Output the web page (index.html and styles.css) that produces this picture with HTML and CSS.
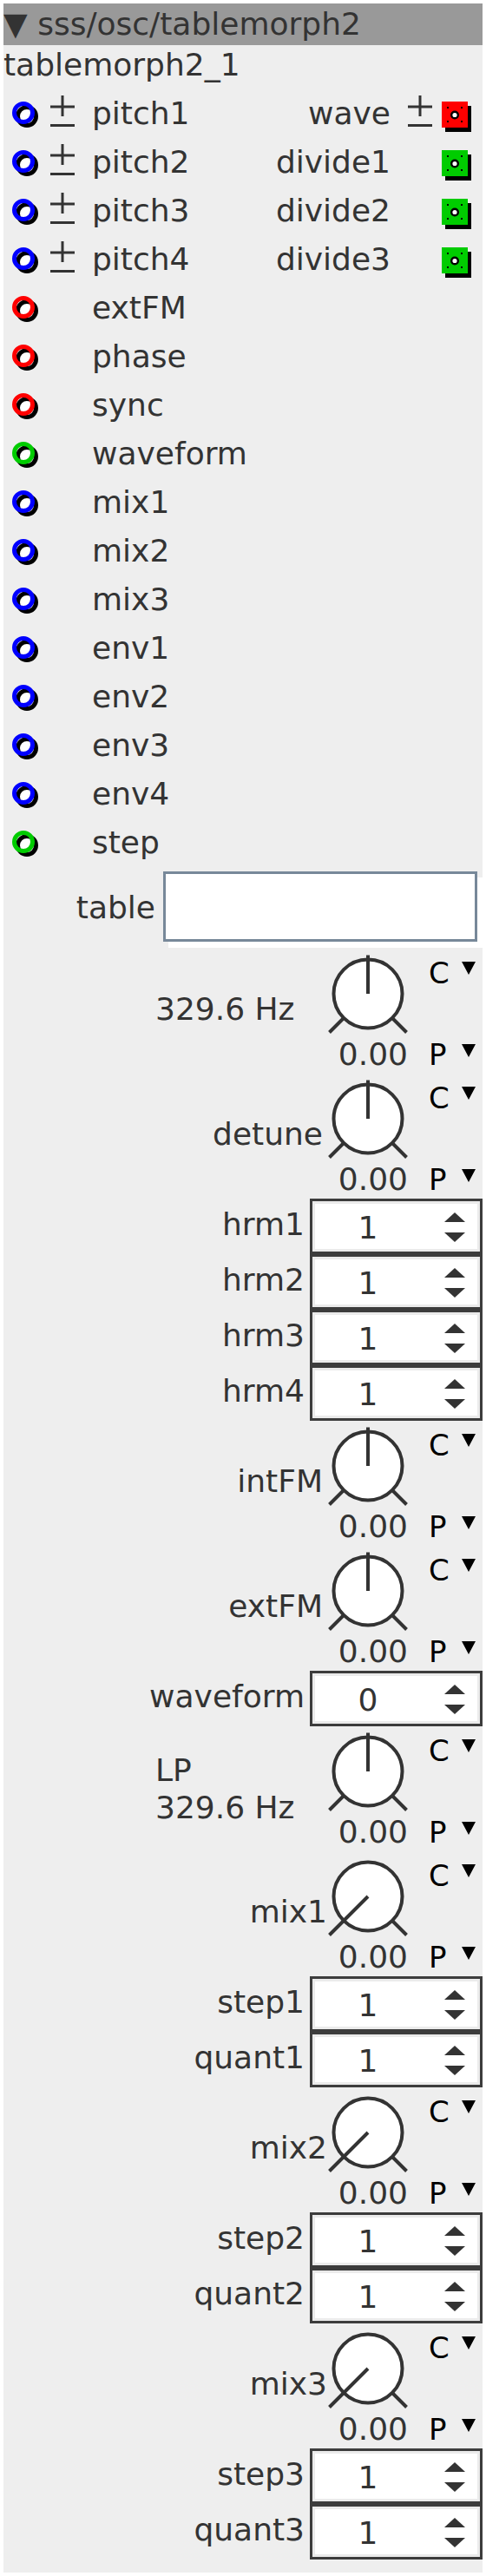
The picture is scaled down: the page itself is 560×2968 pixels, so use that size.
FILE: index.html
```html
<!DOCTYPE html>
<html lang="en">
<head>
    <meta charset="UTF-8">
    <meta name="viewport" content="width=device-width, initial-scale=1.0">
    <title>sss/osc/tablemorph2</title>
    <link rel="stylesheet" href="styles.css">
</head>
<body>
    <!-- shared drawings -->
    <svg class="defs" xmlns="http://www.w3.org/2000/svg">
        <symbol id="inlet" viewBox="0 0 34 34">
            <circle cx="13" cy="13" r="8" fill="#fff"/>
            <circle cx="17" cy="17" r="10.5" fill="none" stroke="#000" stroke-width="5"/>
            <circle cx="13" cy="13" r="10.5" fill="none" stroke="currentColor" stroke-width="5"/>
        </symbol>
        <symbol id="outlet" viewBox="0 0 34 35">
            <rect x="4" y="5" width="30" height="30" fill="#000"/>
            <rect x="0" y="0" width="30" height="30" fill="currentColor"/>
            <rect x="6" y="6" width="2" height="2" fill="#000"/>
            <rect x="22" y="6" width="2" height="2" fill="#000"/>
            <rect x="6" y="22" width="2" height="2" fill="#000"/>
            <rect x="22" y="22" width="2" height="2" fill="#000"/>
            <circle cx="15" cy="15.5" r="3.8" fill="#fff" stroke="#000" stroke-width="2.4"/>
        </symbol>
        <symbol id="pm" viewBox="0 0 30 40">
            <path d="M15 2V26M1 15H29M1 36.5H29" stroke="#333" stroke-width="3" fill="none"/>
        </symbol>
        <symbol id="knob-up" viewBox="0 0 100 100">
            <circle cx="50" cy="50" r="39.5" fill="#fff" stroke="#333" stroke-width="4"/>
            <path d="M21.5 78.5L5.5 94.5M78.5 78.5L94.5 94.5M50 50V5.5" stroke="#333" stroke-width="4" fill="none"/>
        </symbol>
        <symbol id="knob-min" viewBox="0 0 100 100">
            <circle cx="50" cy="50" r="39.5" fill="#fff" stroke="#333" stroke-width="4"/>
            <path d="M50 50L5.5 94.5M78.5 78.5L94.5 94.5" stroke="#333" stroke-width="4" fill="none"/>
        </symbol>
        <symbol id="arrows" viewBox="0 0 24 36">
            <polygon points="12,1 24,12 0,12" fill="#333"/>
            <polygon points="0,24 24,24 12,35" fill="#333"/>
        </symbol>
    </svg>

    <div class="panel">
        <div class="head">▼ sss/osc/tablemorph2</div>
        <div class="title">tablemorph2_1</div>

        <div class="ports">
            <div class="port">
                <svg class="jack blue"><use href="#inlet"/></svg>
                <svg class="pm"><use href="#pm"/></svg>
                <span class="pname">pitch1</span>
                <span class="oname">wave</span>
                <svg class="pm right"><use href="#pm"/></svg>
                <svg class="out red"><use href="#outlet"/></svg>
            </div>
            <div class="port">
                <svg class="jack blue"><use href="#inlet"/></svg>
                <svg class="pm"><use href="#pm"/></svg>
                <span class="pname">pitch2</span>
                <span class="oname">divide1</span>
                <svg class="pm right blank"><use href="#pm"/></svg>
                <svg class="out green"><use href="#outlet"/></svg>
            </div>
            <div class="port">
                <svg class="jack blue"><use href="#inlet"/></svg>
                <svg class="pm"><use href="#pm"/></svg>
                <span class="pname">pitch3</span>
                <span class="oname">divide2</span>
                <svg class="pm right blank"><use href="#pm"/></svg>
                <svg class="out green"><use href="#outlet"/></svg>
            </div>
            <div class="port">
                <svg class="jack blue"><use href="#inlet"/></svg>
                <svg class="pm"><use href="#pm"/></svg>
                <span class="pname">pitch4</span>
                <span class="oname">divide3</span>
                <svg class="pm right blank"><use href="#pm"/></svg>
                <svg class="out green"><use href="#outlet"/></svg>
            </div>
            <div class="port">
                <svg class="jack red"><use href="#inlet"/></svg>
                <svg class="pm blank"><use href="#pm"/></svg>
                <span class="pname">extFM</span>
            </div>
            <div class="port">
                <svg class="jack red"><use href="#inlet"/></svg>
                <svg class="pm blank"><use href="#pm"/></svg>
                <span class="pname">phase</span>
            </div>
            <div class="port">
                <svg class="jack red"><use href="#inlet"/></svg>
                <svg class="pm blank"><use href="#pm"/></svg>
                <span class="pname">sync</span>
            </div>
            <div class="port">
                <svg class="jack green"><use href="#inlet"/></svg>
                <svg class="pm blank"><use href="#pm"/></svg>
                <span class="pname">waveform</span>
            </div>
            <div class="port">
                <svg class="jack blue"><use href="#inlet"/></svg>
                <svg class="pm blank"><use href="#pm"/></svg>
                <span class="pname">mix1</span>
            </div>
            <div class="port">
                <svg class="jack blue"><use href="#inlet"/></svg>
                <svg class="pm blank"><use href="#pm"/></svg>
                <span class="pname">mix2</span>
            </div>
            <div class="port">
                <svg class="jack blue"><use href="#inlet"/></svg>
                <svg class="pm blank"><use href="#pm"/></svg>
                <span class="pname">mix3</span>
            </div>
            <div class="port">
                <svg class="jack blue"><use href="#inlet"/></svg>
                <svg class="pm blank"><use href="#pm"/></svg>
                <span class="pname">env1</span>
            </div>
            <div class="port">
                <svg class="jack blue"><use href="#inlet"/></svg>
                <svg class="pm blank"><use href="#pm"/></svg>
                <span class="pname">env2</span>
            </div>
            <div class="port">
                <svg class="jack blue"><use href="#inlet"/></svg>
                <svg class="pm blank"><use href="#pm"/></svg>
                <span class="pname">env3</span>
            </div>
            <div class="port">
                <svg class="jack blue"><use href="#inlet"/></svg>
                <svg class="pm blank"><use href="#pm"/></svg>
                <span class="pname">env4</span>
            </div>
            <div class="port">
                <svg class="jack green"><use href="#inlet"/></svg>
                <svg class="pm blank"><use href="#pm"/></svg>
                <span class="pname">step</span>
            </div>
        </div>

        <div class="table-row">
            <label for="table">table</label>
            <input type="text" id="table">
        </div>

        <div class="knob">
            <div class="klabel left">329.6 Hz</div>
            <svg class="dial"><use href="#knob-up"/></svg>
            <div class="cp top"><span>C</span><i class="tri"></i></div>
            <div class="kval">0.00</div>
            <div class="cp bottom"><span>P</span><i class="tri"></i></div>
        </div>
        <div class="knob">
            <div class="klabel">detune</div>
            <svg class="dial"><use href="#knob-up"/></svg>
            <div class="cp top"><span>C</span><i class="tri"></i></div>
            <div class="kval">0.00</div>
            <div class="cp bottom"><span>P</span><i class="tri"></i></div>
        </div>

        <div class="spin"><div class="slabel">hrm1</div><div class="sbox"><span class="sval">1</span><svg class="arrows"><use href="#arrows"/></svg></div></div>
        <div class="spin"><div class="slabel">hrm2</div><div class="sbox"><span class="sval">1</span><svg class="arrows"><use href="#arrows"/></svg></div></div>
        <div class="spin"><div class="slabel">hrm3</div><div class="sbox"><span class="sval">1</span><svg class="arrows"><use href="#arrows"/></svg></div></div>
        <div class="spin"><div class="slabel">hrm4</div><div class="sbox"><span class="sval">1</span><svg class="arrows"><use href="#arrows"/></svg></div></div>

        <div class="knob">
            <div class="klabel">intFM</div>
            <svg class="dial"><use href="#knob-up"/></svg>
            <div class="cp top"><span>C</span><i class="tri"></i></div>
            <div class="kval">0.00</div>
            <div class="cp bottom"><span>P</span><i class="tri"></i></div>
        </div>
        <div class="knob">
            <div class="klabel">extFM</div>
            <svg class="dial"><use href="#knob-up"/></svg>
            <div class="cp top"><span>C</span><i class="tri"></i></div>
            <div class="kval">0.00</div>
            <div class="cp bottom"><span>P</span><i class="tri"></i></div>
        </div>

        <div class="spin"><div class="slabel">waveform</div><div class="sbox"><span class="sval">0</span><svg class="arrows"><use href="#arrows"/></svg></div></div>

        <div class="knob">
            <div class="klabel left two">LP<br>329.6 Hz</div>
            <svg class="dial"><use href="#knob-up"/></svg>
            <div class="cp top"><span>C</span><i class="tri"></i></div>
            <div class="kval">0.00</div>
            <div class="cp bottom"><span>P</span><i class="tri"></i></div>
        </div>
        <div class="knob">
            <div class="klabel mix">mix1</div>
            <svg class="dial"><use href="#knob-min"/></svg>
            <div class="cp top"><span>C</span><i class="tri"></i></div>
            <div class="kval">0.00</div>
            <div class="cp bottom"><span>P</span><i class="tri"></i></div>
        </div>

        <div class="spin"><div class="slabel">step1</div><div class="sbox"><span class="sval">1</span><svg class="arrows"><use href="#arrows"/></svg></div></div>
        <div class="spin"><div class="slabel">quant1</div><div class="sbox"><span class="sval">1</span><svg class="arrows"><use href="#arrows"/></svg></div></div>

        <div class="knob">
            <div class="klabel mix">mix2</div>
            <svg class="dial"><use href="#knob-min"/></svg>
            <div class="cp top"><span>C</span><i class="tri"></i></div>
            <div class="kval">0.00</div>
            <div class="cp bottom"><span>P</span><i class="tri"></i></div>
        </div>

        <div class="spin"><div class="slabel">step2</div><div class="sbox"><span class="sval">1</span><svg class="arrows"><use href="#arrows"/></svg></div></div>
        <div class="spin"><div class="slabel">quant2</div><div class="sbox"><span class="sval">1</span><svg class="arrows"><use href="#arrows"/></svg></div></div>

        <div class="knob">
            <div class="klabel mix">mix3</div>
            <svg class="dial"><use href="#knob-min"/></svg>
            <div class="cp top"><span>C</span><i class="tri"></i></div>
            <div class="kval">0.00</div>
            <div class="cp bottom"><span>P</span><i class="tri"></i></div>
        </div>

        <div class="spin"><div class="slabel">step3</div><div class="sbox"><span class="sval">1</span><svg class="arrows"><use href="#arrows"/></svg></div></div>
        <div class="spin"><div class="slabel">quant3</div><div class="sbox"><span class="sval">1</span><svg class="arrows"><use href="#arrows"/></svg></div></div>
    </div>
</body>
</html>
```

FILE: styles.css
```css
body {
    margin: 4px;
    background-color: #fff;
    font-family: "DejaVu Sans", sans-serif;
    font-size: 36px;
    color: #333;
}
.defs {
    display: block;
    width: 0;
    height: 0;
}
.panel {
    background-color: #eee;
    padding-bottom: 15px;
}
.head {
    height: 48px;
    line-height: 48px;
    background-color: #999;
    white-space: nowrap;
}
.title {
    line-height: 42px;
    padding: 2px 0 7px;
}

/* inlets / outlets */
.port {
    display: flex;
    align-items: flex-start;
    height: 56px;
    line-height: 56px;
    padding: 0 13px 0 10px;
    white-space: nowrap;
}
.jack {
    flex: none;
    width: 34px;
    height: 34px;
    margin-top: 14px;
}
.pm {
    flex: none;
    width: 30px;
    height: 40px;
    margin: 5px 0 0 9px;
}
.pm.right {
    margin-left: 19px;
}
.pm.blank {
    visibility: hidden;
}
.pname {
    margin-left: 19px;
}
.oname {
    margin-left: auto;
}
.out {
    flex: none;
    width: 34px;
    height: 35px;
    margin: 14px 0 0 10px;
}
.blue { color: #0000ff; }
.red { color: #ff0000; }
.green { color: #00cc00; }

/* table entry */
.table-row {
    display: flex;
    justify-content: flex-end;
    align-items: flex-start;
    box-sizing: border-box;
    height: 94px;
    padding: 5px 6px 0 0;
}
.table-row label {
    line-height: 42px;
    margin: 21px 9px 0 0;
}
.table-row input {
    box-sizing: border-box;
    width: 362px;
    height: 81px;
    margin: 0;
    padding: 0;
    border: 3px solid #778899;
    background-color: #fff;
    box-shadow: 6px 7px 0 #fff;
    font: inherit;
}

/* knobs */
.knob {
    display: grid;
    grid-template-columns: 1fr 100px 82px;
    grid-template-rows: 110px 34px;
    padding-left: 175px;
}
.klabel {
    grid-column: 1;
    grid-row: 1 / 3;
    text-align: right;
    line-height: 42px;
    padding: 49px 2px 0 0;
    white-space: nowrap;
}
.klabel.left {
    text-align: left;
}
.klabel.two {
    line-height: 43px;
    padding-top: 29px;
}
.klabel.mix {
    padding-right: 0;
    margin-right: -3px;
}
.dial {
    grid-column: 2;
    grid-row: 1;
    width: 100px;
    height: 100px;
    margin-top: 2px;
}
.kval {
    grid-column: 2;
    grid-row: 2;
    text-align: right;
    line-height: 24px;
    padding-right: 4px;
}
.cp {
    grid-column: 3;
    display: flex;
    align-items: flex-start;
    padding-left: 20px;
    color: #000;
    font-size: 34px;
}
.cp span {
    width: 38px;
}
.cp.top {
    grid-row: 1;
}
.cp.top span {
    line-height: 32px;
    margin-top: 12px;
}
.cp.top .tri {
    margin-top: 15px;
}
.cp.bottom {
    grid-row: 2;
}
.cp.bottom span {
    line-height: 24px;
}
.tri {
    display: block;
    width: 0;
    height: 0;
    border-left: 8px solid transparent;
    border-right: 8px solid transparent;
    border-top: 15px solid #000;
}

/* spin boxes */
.spin {
    display: flex;
    justify-content: flex-end;
    align-items: flex-start;
    height: 64px;
}
.slabel {
    line-height: 42px;
    margin: 9px 6px 0 0;
}
.sbox {
    display: flex;
    align-items: flex-start;
    box-sizing: border-box;
    width: 199px;
    height: 64px;
    border: 3px solid #3c3c3c;
    background-color: #fff;
    box-shadow: inset 0 0 0 3px #ebebeb;
}
.sval {
    width: 128px;
    text-align: center;
    line-height: 42px;
    padding-top: 10px;
}
.arrows {
    width: 24px;
    height: 36px;
    margin: 12px 0 0 24px;
}
```
